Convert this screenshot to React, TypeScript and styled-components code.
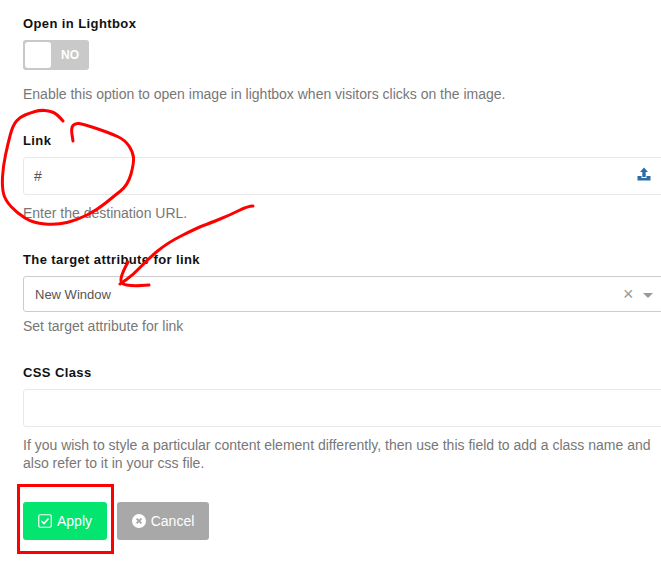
import React from "react";
import styled, { createGlobalStyle } from "styled-components";

const Global = createGlobalStyle`
  html, body { margin: 0; padding: 0; background: #fff; overflow: hidden; }
  body { font-family: "Liberation Sans", Arial, sans-serif; }
`;

const Page = styled.div`
  position: relative;
  width: 661px;
  height: 565px;
  overflow: hidden;
  background: #fff;
`;

const Form = styled.form`
  width: 660px;
  padding: 15px 0 0 23px;
  box-sizing: content-box;
  display: flex;
  flex-direction: column;
`;

const Field = styled.div<{ $mb: number }>`
  margin-bottom: ${(p) => p.$mb}px;
`;

const Label = styled.div`
  font: 700 13px/17px "Liberation Sans", Arial, sans-serif;
  letter-spacing: 0.4px;
  color: #111;
  margin-bottom: 8px;
`;

const Help = styled.div<{ $mt: number }>`
  font: 400 14px/18px "Liberation Sans", Arial, sans-serif;
  color: #777;
  margin-top: ${(p) => p.$mt}px;
  width: 636px;
`;

const Toggle = styled.div`
  width: 66px;
  height: 30px;
  border-radius: 3px;
  background: #c9c9c9;
  padding: 2px;
  box-sizing: border-box;
  display: flex;
  align-items: center;
`;

const Knob = styled.div`
  width: 26px;
  height: 26px;
  background: #fff;
  border-radius: 3px;
`;

const ToggleText = styled.span`
  font: 700 12px "Liberation Sans", Arial, sans-serif;
  color: #fff;
  margin-left: 10px;
`;

const TextBox = styled.div<{ $h: number }>`
  width: 100%;
  height: ${(p) => p.$h}px;
  box-sizing: border-box;
  border: 1px solid #e8e8e8;
  border-radius: 3px;
  display: flex;
  align-items: center;
  justify-content: space-between;
  padding: 0 10px;
  font: 400 14px "Liberation Sans", Arial, sans-serif;
  color: #555;
`;

const SelectBox = styled(TextBox)`
  border-color: #ccc;
  padding-left: 11px;
  font-size: 13px;
  color: #555;
`;

const Controls = styled.div`
  display: flex;
  align-items: center;
  position: absolute;
  top: 285px;
  left: 623px;
  gap: 9px;
`;

const Clear = styled.span`
  font: 400 18px/1 "Liberation Sans", Arial, sans-serif;
  color: #999;
`;

const Caret = styled.span`
  width: 0;
  height: 0;
  border-left: 5px solid transparent;
  border-right: 5px solid transparent;
  border-top: 5px solid #999;
  margin-top: 2px;
`;

const UploadIcon = styled.svg`
  position: absolute;
  left: 637px;
  top: 167px;
`;

const Buttons = styled.div`
  display: flex;
  gap: 10px;
  margin-top: 30px;
`;

const Btn = styled.button<{ $bg: string; $w: number }>`
  width: ${(p) => p.$w}px;
  height: 38px;
  border: 0;
  border-radius: 3px;
  background: ${(p) => p.$bg};
  color: #fff;
  font: 400 14px "Liberation Sans", Arial, sans-serif;
  display: flex;
  align-items: center;
  justify-content: center;
  gap: 5px;
  padding: 0;
`;

const Overlay = styled.svg`
  position: absolute;
  left: 0;
  top: 0;
  pointer-events: none;
`;

type P = [number, number];

const smooth = (pts: P[]) => {
  let d = `M${pts[0][0]} ${pts[0][1]}`;
  for (let i = 1; i < pts.length - 1; i++) {
    const mx = (pts[i][0] + pts[i + 1][0]) / 2;
    const my = (pts[i][1] + pts[i + 1][1]) / 2;
    d += `Q${pts[i][0]} ${pts[i][1]} ${mx} ${my}`;
  }
  const l = pts[pts.length - 1];
  return d + `L${l[0]} ${l[1]}`;
};

const circle: P[] = [
  [63, 121], [57, 114], [50, 111], [40, 110], [30, 113], [20, 117], [13, 125], [8, 143], [3, 167], [2, 187],
  [5, 200], [17, 213], [33, 223], [57, 225], [77, 220], [97, 210], [113, 197], [128, 185], [134, 163],
  [133, 152], [125, 140], [110, 133], [83, 124], [75, 123], [71, 128], [73, 141],
];

const shaft: P[] = [
  [253, 206], [248, 206], [230, 215], [210, 223], [197, 228], [167, 243], [147, 260], [133, 275], [120, 284],
];

const head: P[] = [[128, 262], [122, 273], [120, 284], [133, 286], [149, 285]];

export default function App() {
  return (
    <Page>
      <Global />
      <Form>
        <Field $mb={29}>
          <Label>Open in Lightbox</Label>
          <Toggle>
            <Knob />
            <ToggleText>NO</ToggleText>
          </Toggle>
          <Help $mt={15}>Enable this option to open image in lightbox when visitors clicks on the image.</Help>
        </Field>
        <Field $mb={29}>
          <Label>Link</Label>
          <TextBox $h={38}>#</TextBox>
          <Help $mt={9}>Enter the destination URL.</Help>
        </Field>
        <Field $mb={29}>
          <Label>The target attribute for link</Label>
          <SelectBox $h={36}>New Window</SelectBox>
          <Help $mt={5}>Set target attribute for link</Help>
        </Field>
        <Field $mb={0}>
          <Label>CSS Class</Label>
          <TextBox $h={38} />
          <Help $mt={9}>
            If you wish to style a particular content element differently, then use this field to add a class name and also refer to it in your css file.
          </Help>
        </Field>
        <Buttons>
          <Btn $bg="#03e56f" $w={84}>
            <svg width="14" height="14" viewBox="0 0 14 14" fill="none" stroke="#fff">
              <rect x="0.75" y="0.75" width="12.5" height="12.5" rx="1.5" strokeWidth="1.2" />
              <path d="M3.5 7l2.5 2.5 4.5-5" strokeWidth="1.6" />
            </svg>
            Apply
          </Btn>
          <Btn $bg="#a8a8a8" $w={92}>
            <svg width="14" height="14" viewBox="0 0 14 14">
              <circle cx="7" cy="7" r="7" fill="#fff" />
              <path d="M4.6 4.6l4.8 4.8M9.4 4.6l-4.8 4.8" stroke="#a8a8a8" strokeWidth="2" />
            </svg>
            Cancel
          </Btn>
        </Buttons>
      </Form>
      <UploadIcon width="14" height="14" viewBox="0 0 14 14">
        <path d="M7 0.5L11 5H8.7V10H5.3V5H3Z" fill="#2e6da4" />
        <path d="M0.5 9H4.5V11H9.5V9H13.5V13.5H0.5Z" fill="#2e6da4" />
      </UploadIcon>
      <Controls>
        <Clear>×</Clear>
        <Caret />
      </Controls>
      <Overlay width="661" height="565" viewBox="0 0 661 565" fill="none">
        <g stroke="#f00" strokeWidth="3" strokeLinejoin="round" strokeLinecap="round">
          <path d={smooth(circle)} />
          <path d={smooth(shaft)} />
          <path d={smooth(head)} />
        </g>
        <rect x="18.5" y="485.5" width="94" height="67" stroke="#f00" strokeWidth="3" />
      </Overlay>
    </Page>
  );
}
